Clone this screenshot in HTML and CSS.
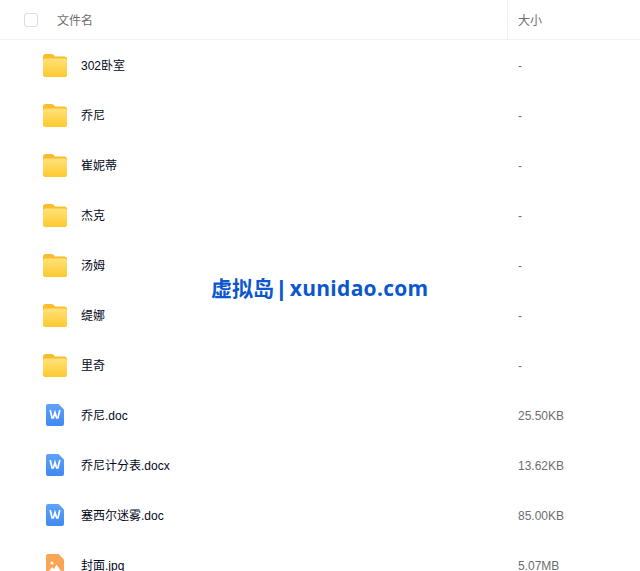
FILE: index.html
```html
<!DOCTYPE html>
<html lang="zh-CN">
<head>
    <meta charset="UTF-8">
    <meta name="viewport" content="width=device-width, initial-scale=1.0">
    <title>文件列表</title>
    <link rel="stylesheet" href="styles.css">
</head>
<body>
    <svg class="defs" width="0" height="0" aria-hidden="true">
        <defs>
            <linearGradient id="folderBody" x1="0" y1="0" x2="0" y2="1">
                <stop offset="0" stop-color="#ffe27a"/>
                <stop offset="1" stop-color="#ffc92e"/>
            </linearGradient>
            <linearGradient id="wordBody" x1="0" y1="0" x2="0" y2="1">
                <stop offset="0" stop-color="#5fa2f9"/>
                <stop offset="1" stop-color="#4089f3"/>
            </linearGradient>
            <symbol id="folder" viewBox="0 0 24 24">
                <path d="M2.500 1h6.200c.8 0 1.400.3 1.900.9L12 3.400h9.500c1.400 0 2.500 1.100 2.500 2.500v15.600c0 1.400-1.100 2.500-2.500 2.500h-19C1.100 24 0 22.900 0 21.500V3.500C0 2.100 1.100 1 2.500 1z" fill="#fbbd2c"/>
                <path d="M2.500 5.400h19c1.400 0 2.500 1.100 2.500 2.500v13.600c0 1.400-1.100 2.500-2.500 2.500h-19C1.100 24 0 22.900 0 21.500V7.900c0-1.400 1.100-2.500 2.500-2.500z" fill="url(#folderBody)"/>
            </symbol>
            <symbol id="word" viewBox="0 0 18 22">
                <path d="M2 0h10.500L18 5.500V20c0 1.100-.9 2-2 2H2c-1.100 0-2-.9-2-2V2C0 .9.900 0 2 0z" fill="url(#wordBody)"/>
                <path d="M4.200 6l1.900 8h1.200L9 8.500l1.700 5.500h1.200l1.900-8" fill="none" stroke="#fff" stroke-width="1.700"/>
            </symbol>
            <symbol id="image" viewBox="0 0 18 22">
                <path d="M2 0h10.500L18 5.500V20c0 1.100-.9 2-2 2H2c-1.100 0-2-.9-2-2V2C0 .9.900 0 2 0z" fill="#f9a457"/>
                <circle cx="6" cy="9" r="1.500" fill="#fff"/>
                <path d="M2.500 18l3.500-5 2 2 2.500-4.500L15.500 18z" fill="#fff"/>
            </symbol>
        </defs>
    </svg>

    <div class="file-list">
        <div class="list-head">
            <div class="col-name">
                <span class="checkbox"></span>
                <span>文件名</span>
            </div>
            <div class="col-size">大小</div>
        </div>

        <div class="row"><div class="row-name"><svg class="icon icon-folder"><use href="#folder"/></svg><span class="name-text">302卧室</span></div><div class="row-size">-</div></div>
        <div class="row"><div class="row-name"><svg class="icon icon-folder"><use href="#folder"/></svg><span class="name-text">乔尼</span></div><div class="row-size">-</div></div>
        <div class="row"><div class="row-name"><svg class="icon icon-folder"><use href="#folder"/></svg><span class="name-text">崔妮蒂</span></div><div class="row-size">-</div></div>
        <div class="row"><div class="row-name"><svg class="icon icon-folder"><use href="#folder"/></svg><span class="name-text">杰克</span></div><div class="row-size">-</div></div>
        <div class="row"><div class="row-name"><svg class="icon icon-folder"><use href="#folder"/></svg><span class="name-text">汤姆</span></div><div class="row-size">-</div></div>
        <div class="row"><div class="row-name"><svg class="icon icon-folder"><use href="#folder"/></svg><span class="name-text">缇娜</span></div><div class="row-size">-</div></div>
        <div class="row"><div class="row-name"><svg class="icon icon-folder"><use href="#folder"/></svg><span class="name-text">里奇</span></div><div class="row-size">-</div></div>
        <div class="row"><div class="row-name"><svg class="icon icon-file"><use href="#word"/></svg><span class="name-text">乔尼.doc</span></div><div class="row-size">25.50KB</div></div>
        <div class="row"><div class="row-name"><svg class="icon icon-file"><use href="#word"/></svg><span class="name-text">乔尼计分表.docx</span></div><div class="row-size">13.62KB</div></div>
        <div class="row"><div class="row-name"><svg class="icon icon-file"><use href="#word"/></svg><span class="name-text">塞西尔迷雾.doc</span></div><div class="row-size">85.00KB</div></div>
        <div class="row"><div class="row-name"><svg class="icon icon-file"><use href="#image"/></svg><span class="name-text">封面.jpg</span></div><div class="row-size">5.07MB</div></div>
    </div>

    <div class="watermark">虚拟岛<span class="bar">|</span><span class="site">xunidao.com</span></div>
</body>
</html>
```

FILE: styles.css
```css
html, body {
    height: 100%;
}
body {
    margin: 0;
    overflow: hidden;
    background-color: #fff;
    font-family: "Liberation Sans", "Noto Sans CJK SC", sans-serif;
    font-size: 12px;
    color: #03081a;
}
.defs {
    position: absolute;
}
.list-head {
    display: flex;
    height: 39px;
    border-bottom: 1px solid #f1f2f4;
    color: #6c6e72;
}
.col-name {
    display: flex;
    align-items: center;
    gap: 19px;
    width: 507px;
    padding-left: 24px;
    box-sizing: border-box;
}
.col-size {
    display: flex;
    align-items: center;
    padding-left: 10px;
    border-left: 1px solid #f1f2f4;
}
.checkbox {
    width: 12px;
    height: 12px;
    border: 1px solid #d9dce1;
    border-radius: 3px;
}
.row {
    display: flex;
    height: 50px;
    align-items: center;
}
.row-name {
    display: flex;
    align-items: center;
    width: 518px;
    padding-left: 43px;
    box-sizing: border-box;
}
.name-text {
    padding-bottom: 2px;
}
.row-size {
    padding-top: 1px;
    color: #6c6e72;
}
.icon {
    flex: none;
}
.icon-folder {
    width: 24px;
    height: 24px;
    margin-right: 14px;
}
.icon-file {
    width: 18px;
    height: 22px;
    margin: 0 17px 0 3px;
}
.watermark {
    position: absolute;
    left: 211px;
    top: 274px;
    font-family: "Open Sans", "Noto Sans CJK SC", sans-serif;
    font-size: 21px;
    line-height: 28px;
    font-weight: 700;
    color: #0b57d0;
    white-space: nowrap;
}
.bar {
    margin: 0 3px 0 2px;
    font-weight: 800;
}
.site {
    letter-spacing: 0.3px;
}
```
